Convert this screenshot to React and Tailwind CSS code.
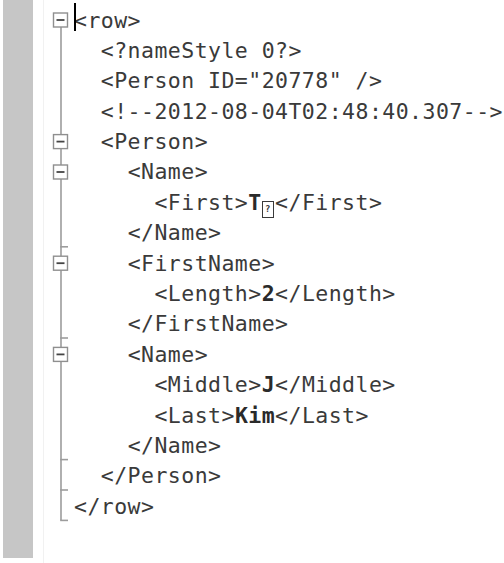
import React from 'react'

const LINE = 30.4

const lines = [
  { lvl: 0, parts: [['<row>']] },
  { lvl: 1, parts: [['<?nameStyle 0?>']] },
  { lvl: 1, parts: [['<Person ID="20778" />']] },
  { lvl: 1, parts: [['<!--2012-08-04T02:48:40.307-->']] },
  { lvl: 1, parts: [['<Person>']] },
  { lvl: 2, parts: [['<Name>']] },
  { lvl: 3, parts: [['<First>'], ['T', 'b'], ['?', 'box'], ['</First>']] },
  { lvl: 2, parts: [['</Name>']] },
  { lvl: 2, parts: [['<FirstName>']] },
  { lvl: 3, parts: [['<Length>'], ['2', 'b'], ['</Length>']] },
  { lvl: 2, parts: [['</FirstName>']] },
  { lvl: 2, parts: [['<Name>']] },
  { lvl: 3, parts: [['<Middle>'], ['J', 'b'], ['</Middle>']] },
  { lvl: 3, parts: [['<Last>'], ['Kim', 'b'], ['</Last>']] },
  { lvl: 2, parts: [['</Name>']] },
  { lvl: 1, parts: [['</Person>']] },
  { lvl: 0, parts: [['</row>']] },
]

// rows with a collapse box, rows where a block ends
const boxes = [0, 4, 5, 8, 11]
const ends = [7, 10, 14, 15, 16]

function Outline() {
  const cy = (i) => 20 + LINE * i
  return (
    <svg width="30" height="563" className="shrink-0">
      <line x1="17" y1={cy(0) + 7} x2="17" y2={cy(16) + 14} stroke="#9c9c9c" strokeWidth="1.6" />
      {ends.map((i) => (
        <line key={'e' + i} x1="16.2" y1={cy(i) + 14} x2="24" y2={cy(i) + 14} stroke="#9c9c9c" strokeWidth="1.6" />
      ))}
      {boxes.map((i) => (
        <g key={'b' + i}>
          <rect x="9.5" y={cy(i) - 7} width="14" height="14" fill="#fff" stroke="#8f8f8f" strokeWidth="1.4" />
          <line x1="12.5" y1={cy(i)} x2="20.5" y2={cy(i)} stroke="#444" strokeWidth="1.8" />
        </g>
      ))}
    </svg>
  )
}

export default function App() {
  return (
    <div className="flex h-[563px] w-[504px] overflow-hidden bg-white">
      <div className="ml-[3px] h-[558px] w-[30px] shrink-0 bg-[#c6c6c6]" />
      <div className="h-full w-[11px] shrink-0 border-r border-[#f1f1f1]" />
      <Outline />
      <div className="flex-1 pt-[5.5px] font-['DejaVu_Sans_Mono',monospace] text-[21.5px] tracking-[0.46px] text-[#3a3a3a]">
        {lines.map((ln, i) => (
          <div key={i} className="relative h-[30.4px] whitespace-pre leading-[30.4px]">
            {i === 0 && <span className="absolute left-0 top-[-3px] h-[28px] w-[1.5px] bg-black" />}
            {'  '.repeat(ln.lvl)}
            {ln.parts.map(([t, k], j) =>
              k === 'box' ? (
                <span key={j} className="inline-flex w-[13.4px] justify-start align-[-2px]">
                  <span className="flex h-[17px] w-[12px] items-center justify-center border-[1.5px] border-[#3a3a3a] text-[9px] leading-none font-bold tracking-normal">
                    ?
                  </span>
                </span>
              ) : (
                <span key={j} className={k === 'b' ? 'font-bold text-[#2a2a2a]' : ''}>
                  {t}
                </span>
              )
            )}
          </div>
        ))}
      </div>
    </div>
  )
}
